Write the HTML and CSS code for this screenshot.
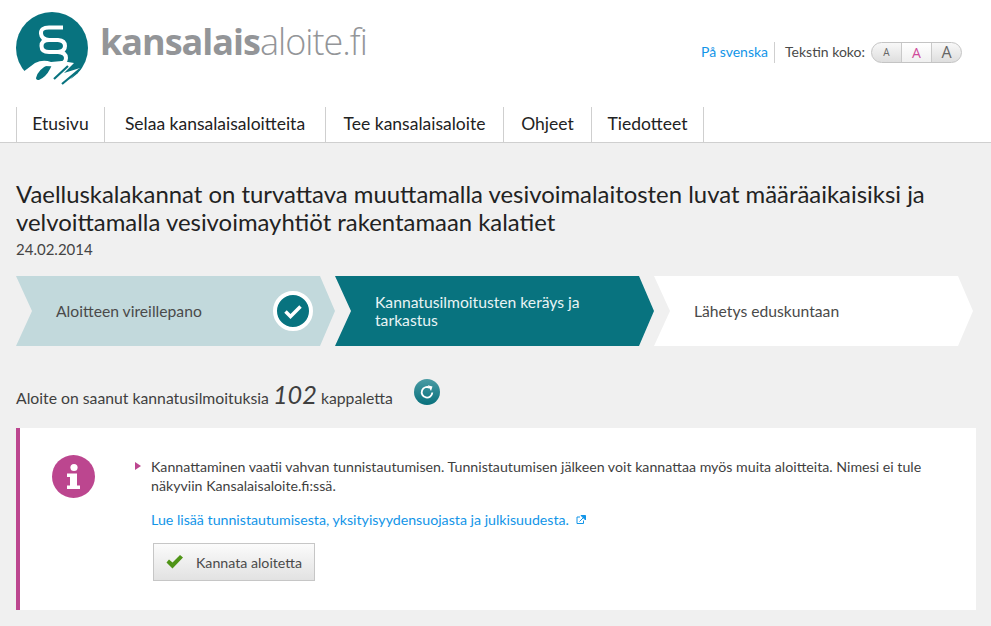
FILE: index.html
```
<!DOCTYPE html>
<html lang="fi">
<head>
<meta charset="utf-8">
<title>Kansalaisaloite.fi</title>
<link rel="stylesheet" href="styles.css">
</head>
<body>
<header class="header">
  <div class="topbar">
    <a class="logo" href="#">
      <svg class="logo-mark" width="72" height="74" viewBox="0 0 72 74">
        <circle cx="36" cy="36" r="36" fill="#08737f"/>
        <path d="M7 60L19 51Q27 47 35 50L46 49L58 51L48 61L64 56L48 74H7Z" fill="#fff"/>
        <path d="M20 66Q22 57 34 52Q37 52 34 57Q30 65 23 68Q20 68 20 66Z" fill="#08737f"/>
        <path d="M38 67L52 54M46 72L64 57" stroke="#08737f" stroke-width="2.200" fill="none"/>
        <path d="M47 15.500H33Q24.500 15.500 25 21.500T33 28H42Q49 28.500 49 34T42 40H33Q25.500 40 25.500 34T33 28M33 40H42Q50 40.500 50 46T42 52.500L28 52" fill="none" stroke="#fff" stroke-width="4"/>
      </svg>
      <span class="logo-text"><b>kansalais</b>aloite.fi</span>
    </a>
    <div class="tools">
      <a class="lang" href="#">På svenska</a>
      <span class="size-label">Tekstin koko:</span>
      <div class="sizes">
        <span class="size size-s">A</span>
        <span class="size size-m">A</span>
        <span class="size size-l">A</span>
      </div>
    </div>
  </div>
  <nav class="nav">
    <a href="#">Etusivu</a>
    <a href="#">Selaa kansalaisaloitteita</a>
    <a href="#">Tee kansalaisaloite</a>
    <a href="#">Ohjeet</a>
    <a href="#">Tiedotteet</a>
  </nav>
</header>
<main class="main">
  <h1 class="title">Vaelluskalakannat on turvattava muuttamalla vesivoimalaitosten luvat määräaikaisiksi ja velvoittamalla vesivoimayhtiöt rakentamaan kalatiet</h1>
  <div class="date">24.02.2014</div>
  <ol class="steps">
    <li class="step step-done">
      <span>Aloitteen vireillepano</span>
      <svg class="step-check" width="40" height="40" viewBox="0 0 40 40">
        <circle cx="20" cy="20" r="18" fill="#08737f" stroke="#fff" stroke-width="4"/>
        <path d="M12.500 20.500l5 5 10-10" fill="none" stroke="#fff" stroke-width="3.500"/>
      </svg>
    </li>
    <li class="step step-current"><span>Kannatusilmoitusten keräys ja tarkastus</span></li>
    <li class="step step-next"><span>Lähetys eduskuntaan</span></li>
  </ol>
  <div class="count">
    <span>Aloite on saanut kannatusilmoituksia</span>
    <em class="count-num">102</em>
    <span>kappaletta</span>
    <a class="refresh" href="#" aria-label="Päivitä">
      <svg width="26" height="26" viewBox="0 0 26 26">
        <path d="M15.800 8.800a5.300 5.300 0 1 0 2.500 4.700" fill="none" stroke="#fff" stroke-width="1.800"/>
        <path d="M13.800 6.200l4.700 1.300-1.500 4.500Z" fill="#fff"/>
      </svg>
    </a>
  </div>
  <section class="panel">
    <svg class="info" width="43" height="43" viewBox="0 0 43 43">
      <circle cx="21.500" cy="21.500" r="21.500" fill="#bc468f"/>
      <circle cx="22" cy="12.500" r="3.600" fill="#fff"/>
      <path d="M15 18.500h10v12h3v3.500H15v-3.500h3v-8.500h-3Z" fill="#fff"/>
    </svg>
    <div class="panel-body">
      <p class="lead">Kannattaminen vaatii vahvan tunnistautumisen. Tunnistautumisen jälkeen voit kannattaa myös muita aloitteita. Nimesi ei tule näkyviin Kansalaisaloite.fi:ssä.</p>
      <p class="more">
        <a href="#">Lue lisää tunnistautumisesta, yksityisyydensuojasta ja julkisuudesta.</a>
        <svg class="ext" width="10" height="10" viewBox="0 0 10 10">
          <path d="M7.500 5.500v3h-6.500v-6.500h3" fill="none" stroke="#1295e8" stroke-width="1"/>
          <path d="M3.500 6.500l4.500-4.500M5 .5h4.500v4.500Z" fill="#1295e8" stroke="#1295e8" stroke-width="1"/>
        </svg>
      </p>
      <a class="button" href="#">
        <svg width="17" height="14" viewBox="0 0 17 14">
          <path d="M.5 7.500l2.500-3 3.500 3 7.500-7.500 3 2.500-10.500 11Z" fill="#4f9417"/>
        </svg>
        <span>Kannata aloitetta</span>
      </a>
    </div>
  </section>
</main>
</body>
</html>
```
FILE: styles.css
```
* { box-sizing: border-box; }
html, body { margin: 0; padding: 0; }
body {
  height: 626px;
  overflow: hidden;
  background: #f0f0f0;
  color: #3f3f3f;
  font-family: Lato, "Open Sans", sans-serif;
}
a { text-decoration: none; }

.header { background: #fff; border-bottom: 1px solid #cfcfcf; height: 143px; padding: 0 16px; }
.topbar { display: flex; justify-content: space-between; height: 107px; padding: 12px 13px 0 0; }
.logo { display: flex; gap: 12px; height: 74px; }
.logo-mark { flex: none; }
.logo-text { font-family: "Open Sans", sans-serif; font-size: 36px; line-height: 60px; letter-spacing: -1px; color: #939598; font-weight: 300; }
.logo-text b { font-weight: 700; }

.tools { display: flex; align-items: center; height: 16px; margin-top: 32px; font-size: 14px; }
.lang { color: #1295e8; padding: 0 6px 2px 0; border-right: 1px solid #cfcfcf; line-height: 19px; }
.size-label { margin: 0 6px 2px 10px; color: #4a4a4a; }
.sizes { display: flex; height: 21px; border: 1px solid #c4c4c4; border-radius: 11px; background: linear-gradient(#f8f8f8, #dedede); overflow: hidden; }
.size { width: 30px; display: flex; align-items: center; justify-content: center; border-left: 1px solid #c9c9c9; color: #666; font-family: "Open Sans", sans-serif; }
.size:first-child { border-left: 0; }
.size-s { font-size: 10px; width: 29px; }
.size-m { font-size: 14px; color: #d0499b; background: linear-gradient(#fff, #f0f0f0); }
.size-l { font-size: 16px; }

.nav { display: grid; grid-template-columns: 89px 221px 178px 88px 112px; height: 35px; }
.nav a { display: flex; align-items: center; justify-content: center; padding-bottom: 2px; border-right: 1px solid #cfcfcf; color: #222; font-size: 17.500px; }
.nav a:first-child { border-left: 1px solid #cfcfcf; }

.main { padding: 37px 15px 0 16px; }
.title { margin: 0; font-size: 23.900px; font-weight: 400; line-height: 28px; color: #222; }
.date { margin-top: 3px; font-size: 15px; line-height: 20px; color: #444; }

.steps { display: flex; list-style: none; margin: 17px 0 0; padding: 0; }
.step {
  width: 319px; height: 70px; display: flex; align-items: center; justify-content: space-between;
  padding: 0 22px 0 40px; font-size: 15.700px; line-height: 18px;
  clip-path: polygon(0 0, 304px 0, 319px 35px, 304px 70px, 0 70px, 16px 35px);
}
.step-done { background: #c2d9dc; color: #4a4a4a; }
.step-current { background: #08737f; color: #e8f4f5; }
.step-current span { width: 230px; }
.step-next { background: #fff; color: #4a4a4a; }

.count { display: flex; align-items: baseline; height: 26px; margin-top: 35px; font-size: 15.750px; }
.count-num { font-family: Lato, sans-serif; font-size: 25.300px; font-style: italic; font-weight: 400; margin: 0 4px; line-height: 26px; }
.refresh { display: block; width: 26px; height: 26px; margin: -2px 0 0 21px; border-radius: 50%; background: linear-gradient(#4a9ba4, #08707c); align-self: flex-start; }
.refresh svg { display: block; }

.panel { display: flex; height: 182px; margin-top: 21px; background: #fff; border-left: 4px solid #bc468f; padding: 27px 16px 0 32px; }
.info { flex: none; }
.panel-body { margin-left: 56px; padding-top: 2px; flex: 1; font-size: 14.200px; line-height: 19px; }
.lead { position: relative; margin: 0; }
.lead::before { content: ""; position: absolute; left: -16px; top: 5px; border-left: 6px solid #bc468f; border-top: 4px solid transparent; border-bottom: 4px solid transparent; }
.more { margin: 15px 0 0; display: flex; align-items: center; gap: 7px; }
.more a { color: #1295e8; }
.button { display: inline-flex; align-items: center; gap: 13px; height: 38px; margin: 14px 0 0 2px; padding: 0 12px; border: 1px solid #c6c6c6; background: linear-gradient(#fbfbfb, #e2e2e2); color: #4a4a4a; font-size: 14.200px; }
```
